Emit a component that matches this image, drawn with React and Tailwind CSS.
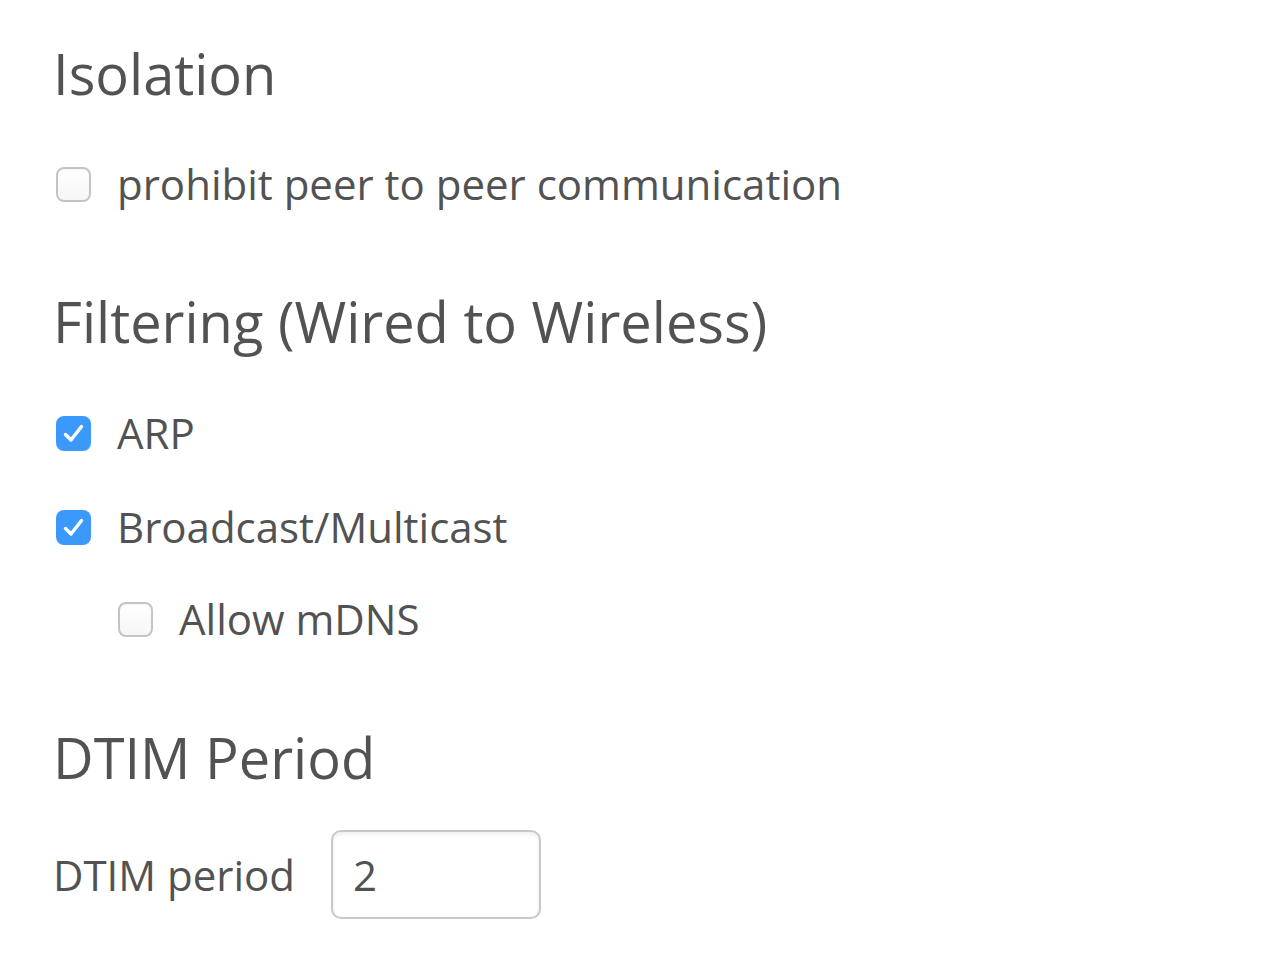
import React from "react";

function Box({ checked }) {
  if (checked) {
    return (
      <span className="flex h-[35px] w-[35px] shrink-0 items-center justify-center rounded-[8px] bg-[#3b99fc]">
        <svg width="35" height="35" viewBox="0 0 35 35" fill="none">
          <path d="M9.5 18.5 L15 24 L25.5 10.5" stroke="white" strokeWidth="3.4" strokeLinecap="round" strokeLinejoin="round" />
        </svg>
      </span>
    );
  }
  return (
    <span className="block h-[35px] w-[35px] shrink-0 rounded-[8px] border-2 border-[#c4c4c4] bg-gradient-to-b from-white to-[#f6f6f6] shadow-[inset_0_1px_1px_rgba(0,0,0,0.04)]" />
  );
}

function Row({ checked, label, indent }) {
  return (
    <div className={`flex h-[48px] items-center gap-[26px] ${indent ? "pl-[65px]" : "pl-[3px]"}`}>
      <Box checked={checked} />
      <span>{label}</span>
    </div>
  );
}

export default function App() {
  return (
    <div
      className="min-h-[978px] bg-white pl-[53px] pt-[42px] text-[42px] leading-[48px] text-[#525252]"
      style={{ fontFamily: '"Open Sans", "Noto Sans", sans-serif' }}
    >
      <h2 className="text-[56px] leading-[62px]">Isolation</h2>
      <div className="mt-[56px]">
        <Row label="prohibit peer to peer communication" />
      </div>
      <h2 className="mt-[82px] text-[56px] leading-[62px]">Filtering (Wired to Wireless)</h2>
      <div className="mt-[57px] flex flex-col">
        <Row checked label="ARP" />
        <div className="mt-[46px]">
          <Row checked label="Broadcast/Multicast" />
        </div>
        <div className="mt-[44px]">
          <Row label="Allow mDNS" indent />
        </div>
      </div>
      <h2 className="mt-[83px] text-[56px] leading-[62px]">DTIM Period</h2>
      <div className="mt-[42px] flex items-center gap-[36px]">
        <span>DTIM period</span>
        <div className="flex h-[89px] w-[210px] items-center rounded-[10px] border-2 border-[#c8c8c8] pl-[20px] shadow-[inset_0_2px_4px_rgba(0,0,0,0.08)]">
          2
        </div>
      </div>
    </div>
  );
}
